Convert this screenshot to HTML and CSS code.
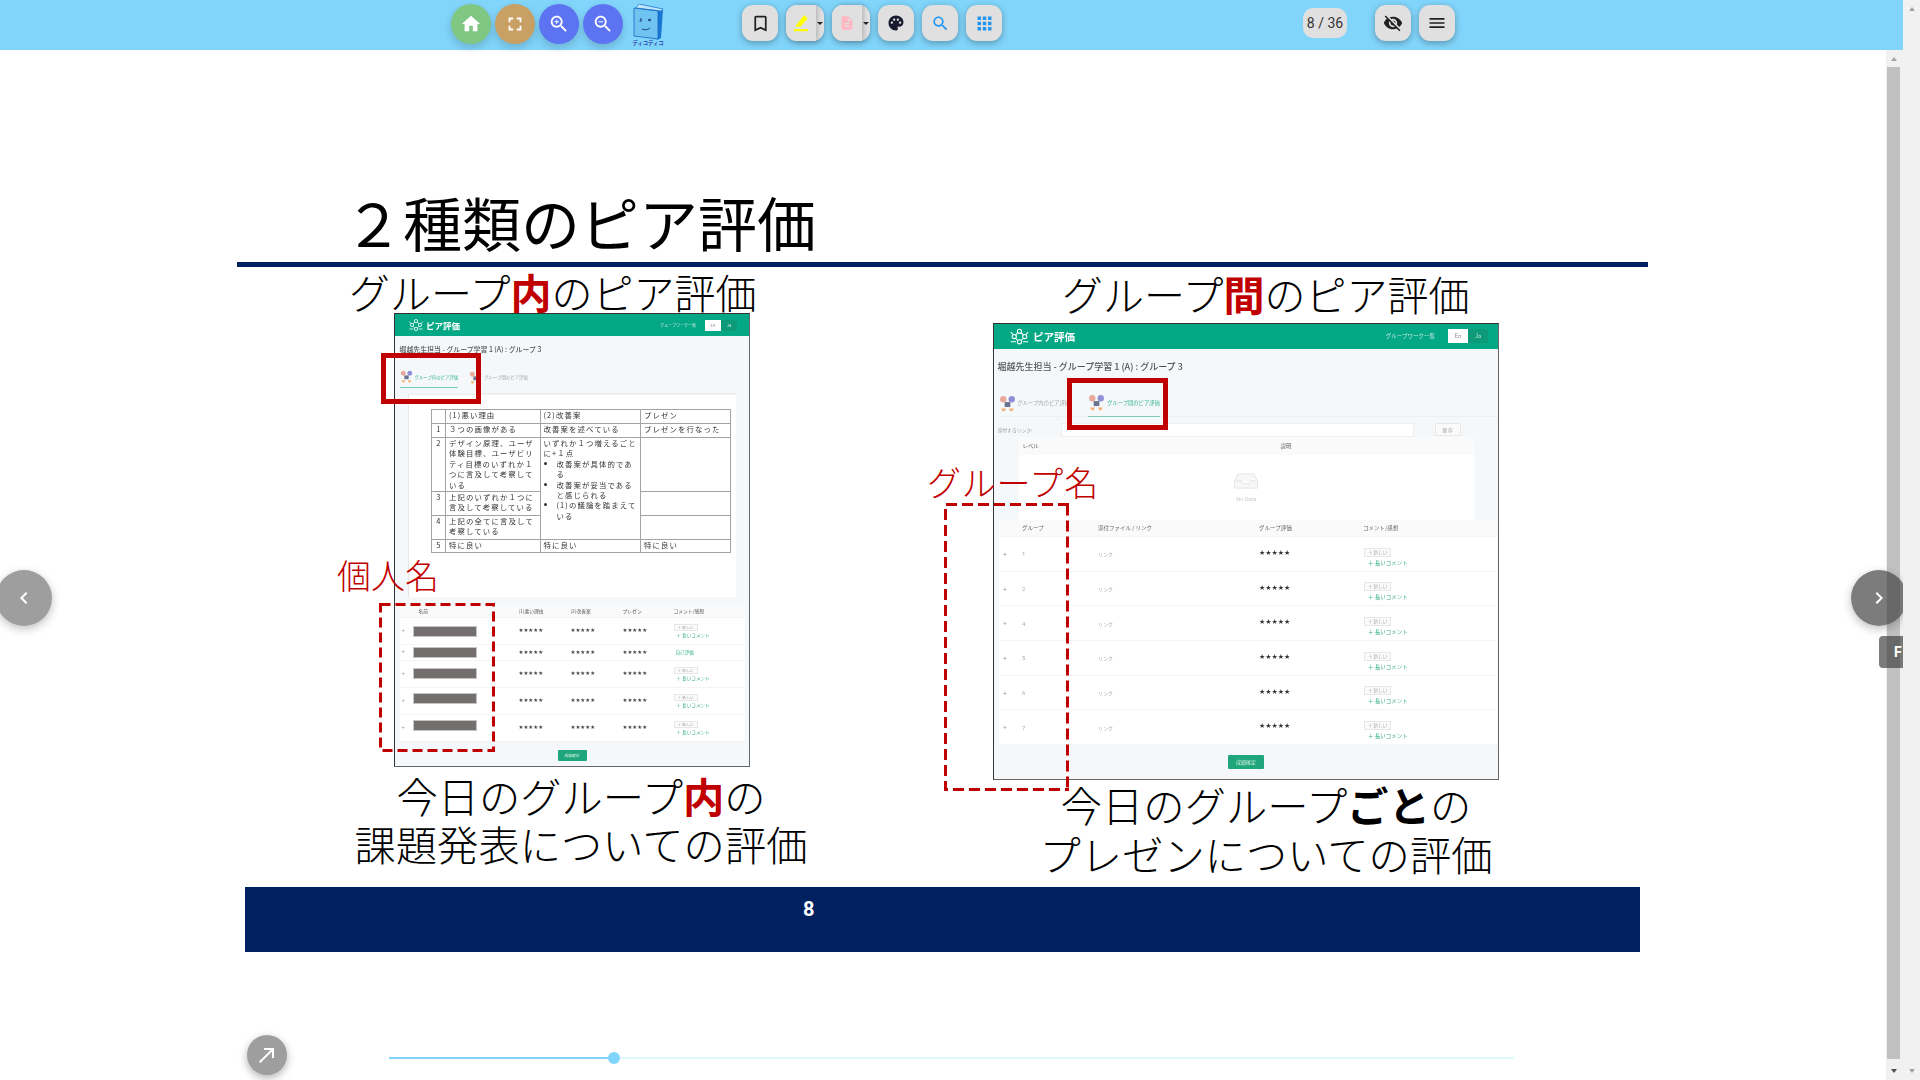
FILE: index.html
```html
<!DOCTYPE html>
<html lang="ja">
<head>
<meta charset="utf-8">
<title>2種類のピア評価</title>
<link rel="stylesheet" href="styles.css">
</head>
<body>
<svg class="defs" width="0" height="0" aria-hidden="true">
  <symbol id="net" viewBox="0 0 24 24">
    <g fill="none" stroke="#fff" stroke-width="1.2">
      <circle cx="12" cy="6" r="2.4"/><circle cx="6" cy="12" r="2.4"/><circle cx="18" cy="12" r="2.4"/><circle cx="12" cy="18" r="2.4"/>
      <path d="M10 7.5 7.5 10.5M14 7.5l2.500 3M7.500 14l2.500 2.500M16.500 14 14 16.500M2 7l3 3M22 7l-3 3M2 18h6M16 18h6"/>
    </g>
  </symbol>
  <symbol id="people" viewBox="0 0 24 24">
    <circle cx="6" cy="6" r="4.500" fill="#e9a99b"/><circle cx="18" cy="6" r="4.500" fill="#8f8fd6"/>
    <rect x="8" y="10" width="8" height="7" fill="#6d7290"/>
    <path d="M3 19h7l-2 4H5zM14 19h7l-2 4h-3z" fill="#f3b27a"/>
  </symbol>
</svg>
<div class="app">
  <div class="main">
    <header class="topbar">
      <div class="round-group">
        <button class="round home"><svg class="ic" viewBox="0 0 24 24"><path d="M10 20v-6h4v6h5v-8h3L12 3 2 12h3v8z"/></svg></button>
        <button class="round full"><svg class="ic" viewBox="0 0 24 24"><path d="M7 14H5v5h5v-2H7v-3zm-2-4h2V7h3V5H5v5zm12 7h-3v2h5v-5h-2v3zM14 5v2h3v3h2V5h-5z"/></svg></button>
        <button class="round zoom"><svg class="ic" viewBox="0 0 24 24"><path d="M15.500 14h-.79l-.28-.27C15.410 12.590 16 11.110 16 9.500 16 5.910 13.090 3 9.500 3S3 5.910 3 9.500 5.910 16 9.500 16c1.610 0 3.090-.59 4.230-1.570l.27.28v.79l5 4.990L20.490 19l-4.990-5zm-6 0C7.010 14 5 11.990 5 9.500S7.010 5 9.500 5 14 7.010 14 9.500 11.990 14 9.500 14z"/><path d="M12 10h-2v2H9v-2H7V9h2V7h1v2h2v1z"/></svg></button>
        <button class="round zoom"><svg class="ic" viewBox="0 0 24 24"><path d="M15.500 14h-.79l-.28-.27C15.410 12.590 16 11.110 16 9.500 16 5.910 13.090 3 9.500 3S3 5.910 3 9.500 5.910 16 9.500 16c1.610 0 3.090-.59 4.230-1.570l.27.28v.79l5 4.990L20.490 19l-4.990-5zm-6 0C7.010 14 5 11.990 5 9.500S7.010 5 9.500 5 14 7.010 14 9.500 11.990 14 9.500 14zM7 9h5v1H7z"/></svg></button>
      </div>
      <div class="logo">
        <svg class="logo-book" viewBox="0 0 30 36">
          <path d="M6 0 30 5 28 34 24 36Z" fill="#1976d2"/>
          <path d="M6 0 30 5 28 7 3 4Z" fill="#bfe6fb" stroke="#1976d2" stroke-width=".7"/>
          <path d="M1 4 25 7 25 35 1 32Z" fill="#6fc3f0" stroke="#1565c0" stroke-width=".8"/>
          <path d="M8 14v4M8 16l-1.500 1M18 15l-3 1 3 1M9 25c3 1.500 6 .8 8-1" fill="none" stroke="#173f7a" stroke-width="1"/>
        </svg>
        <span class="logo-text">ディコディコ</span>
      </div>
      <div class="tools">
        <button class="tool"><svg class="ic dark bookmark" viewBox="0 0 24 24"><path d="M17 3H7c-1.100 0-2 .9-2 2v16l7-3 7 3V5c0-1.100-.9-2-2-2zm0 15-5-2.180L7 18V5h10v13z"/></svg></button>
        <div class="split">
          <button class="split-main"><svg class="ic yellow" viewBox="0 0 24 24"><path d="M16 1.500 21 5.500 11.500 17H5.500V14.500zM2.500 20h19v3h-19z"/></svg></button>
          <span class="caret"></span>
        </div>
        <div class="split">
          <button class="split-main"><svg class="ic pink" viewBox="0 0 24 24"><path d="M14 2H6c-1.100 0-2 .9-2 2v16c0 1.100.9 2 2 2h12c1.100 0 2-.9 2-2V8l-6-6zm2 16H8v-2h8v2zm0-4H8v-2h8v2zm-3-5V3.500L18.500 9H13z"/></svg></button>
          <span class="caret"></span>
        </div>
        <button class="tool"><svg class="ic navy" viewBox="0 0 24 24"><path d="M12 2C6.490 2 2 6.490 2 12s4.490 10 10 10c1.380 0 2.500-1.120 2.500-2.500 0-.61-.23-1.200-.64-1.670-.08-.1-.13-.21-.13-.33 0-.28.22-.5.5-.5H16c3.310 0 6-2.690 6-6 0-4.960-4.490-9-10-9zm5.500 11c-.83 0-1.500-.67-1.500-1.500s.67-1.500 1.500-1.500 1.500.67 1.500 1.500-.67 1.500-1.500 1.500zm-3-4c-.83 0-1.500-.67-1.500-1.500S13.670 6 14.500 6s1.500.67 1.500 1.500S15.330 9 14.500 9zM5 11.500c0-.83.67-1.500 1.500-1.500s1.500.67 1.500 1.500S7.330 13 6.500 13 5 12.330 5 11.500zm6-4c0 .83-.67 1.500-1.500 1.500S8 8.330 8 7.500 8.670 6 9.500 6s1.500.67 1.500 1.500z"/></svg></button>
        <button class="tool"><svg class="ic blue find" viewBox="0 0 24 24"><path d="M15.500 14h-.79l-.28-.27C15.410 12.590 16 11.110 16 9.500 16 5.910 13.090 3 9.500 3S3 5.910 3 9.500 5.910 16 9.500 16c1.610 0 3.090-.59 4.230-1.570l.27.28v.79l5 4.990L20.490 19l-4.990-5zm-6 0C7.010 14 5 11.990 5 9.500S7.010 5 9.500 5 14 7.010 14 9.500 11.990 14 9.500 14z"/></svg></button>
        <button class="tool"><svg class="ic blue apps" viewBox="0 0 24 24"><path d="M4 8h4V4H4v4zm6 12h4v-4h-4v4zm-6 0h4v-4H4v4zm0-6h4v-4H4v4zm6 0h4v-4h-4v4zm6-10v4h4V4h-4zm-6 4h4V4h-4v4zm6 6h4v-4h-4v4zm0 6h4v-4h-4v4z"/></svg></button>
      </div>
      <div class="pager">8 / 36</div>
      <div class="side-tools">
        <button class="tool"><svg class="ic dark side" viewBox="0 0 24 24"><path d="M12 7c2.760 0 5 2.240 5 5 0 .65-.13 1.260-.36 1.830l2.920 2.920c1.510-1.260 2.700-2.890 3.430-4.750-1.730-4.390-6-7.500-11-7.500-1.400 0-2.740.25-3.980.7l2.160 2.160C10.740 7.130 11.350 7 12 7zM2 4.270l2.280 2.280.46.46C3.080 8.300 1.780 10.020 1 12c1.730 4.390 6 7.500 11 7.500 1.550 0 3.030-.3 4.380-.84l.42.42L19.730 22 21 20.730 3.270 3 2 4.270zM7.530 9.800l1.550 1.550c-.05.21-.08.43-.08.65 0 1.660 1.340 3 3 3 .22 0 .44-.03.65-.08l1.550 1.550c-.67.33-1.410.53-2.200.53-2.760 0-5-2.240-5-5 0-.79.2-1.530.53-2.200zm4.310-.78 3.150 3.150.02-.16c0-1.660-1.340-3-3-3l-.17.01z"/></svg></button>
        <button class="tool"><svg class="ic dark side" viewBox="0 0 24 24"><path d="M3 18h18v-2H3v2zm0-5h18v-2H3v2zm0-7v2h18V6H3z"/></svg></button>
      </div>
    </header>

    <div class="viewer">
      <div class="stage">
        <section class="slide">
          <h1 class="title">２種類のピア評価</h1>
          <div class="rule"></div>

          <div class="sub sub-left">グループ<b>内</b>のピア評価</div>
          <div class="sub sub-right">グループ<b>間</b>のピア評価</div>

          <!-- left screenshot -->
          <div class="shot shot-left">
            <div class="s-head">
              <svg class="s-logo"><use href="#net"/></svg>
              <span class="s-brand">ピア評価</span>
              <span class="s-nav">グループワーク一覧</span>
              <span class="s-en">En</span><span class="s-ja">Ja</span>
            </div>
            <div class="s-title">堀越先生担当 - グループ学習 1 (A) : グループ 3</div>
            <div class="s-tabs">
              <div class="s-tab on"><svg class="s-tic"><use href="#people"/></svg><span>グループ内のピア評価</span></div>
              <div class="s-tab"><svg class="s-tic"><use href="#people"/></svg><span>グループ間のピア評価</span></div>
            </div>
            <div class="card">
              <table class="rubric">
                <colgroup><col class="c0"><col class="c1"><col class="c2"><col class="c3"></colgroup>
                <tr class="h14"><td></td><td>(1)悪い理由</td><td>(2)改善案</td><td>プレゼン</td></tr>
                <tr class="h14"><td class="num">1</td><td>３つの画像がある</td><td>改善案を述べている</td><td>プレゼンを行なった</td></tr>
                <tr class="h54"><td class="num">2</td><td>デザイン原理、ユーザ<br>体験目標、ユーザビリ<br>ティ目標のいずれか１<br>つに言及して考察して<br>いる</td>
                  <td rowspan="3">いずれか１つ増えるごと<br>に+１点
                    <ul><li>改善案が具体的であ<br>る</li><li>改善案が妥当である<br>と感じられる</li><li>(1)の議論を踏まえて<br>いる</li></ul></td><td></td></tr>
                <tr class="h24"><td class="num">3</td><td>上記のいずれか１つに<br>言及して考察している</td><td></td></tr>
                <tr class="h24"><td class="num">4</td><td>上記の全てに言及して<br>考察している</td><td></td></tr>
                <tr class="h13"><td class="num">5</td><td>特に良い</td><td>特に良い</td><td>特に良い</td></tr>
              </table>
            </div>
            <div class="ltable">
              <div class="lrow lhead"><span></span><span class="name-h">名前</span><span>(1)悪い理由</span><span>(2)改善案</span><span>プレゼン</span><span>コメント/感想</span></div>
              <div class="lrow tall"><span class="pm">+</span><i class="bar"></i><span class="st">★★★★★</span><span class="st">★★★★★</span><span class="st">★★★★★</span><div class="cm"><span class="new">＋ 新しい</span><span class="long">＋ 長いコメント</span></div></div>
              <div class="lrow short"><span class="pm">+</span><i class="bar"></i><span class="st">★★★★★</span><span class="st">★★★★★</span><span class="st">★★★★★</span><div class="cm"><span class="long self">自己評価</span></div></div>
              <div class="lrow tall"><span class="pm">+</span><i class="bar"></i><span class="st">★★★★★</span><span class="st">★★★★★</span><span class="st">★★★★★</span><div class="cm"><span class="new">＋ 新しい</span><span class="long">＋ 長いコメント</span></div></div>
              <div class="lrow tall"><span class="pm">+</span><i class="bar nudge"></i><span class="st">★★★★★</span><span class="st">★★★★★</span><span class="st">★★★★★</span><div class="cm"><span class="new">＋ 新しい</span><span class="long">＋ 長いコメント</span></div></div>
              <div class="lrow tall"><span class="pm">+</span><i class="bar nudge"></i><span class="st">★★★★★</span><span class="st">★★★★★</span><span class="st">★★★★★</span><div class="cm"><span class="new">＋ 新しい</span><span class="long">＋ 長いコメント</span></div></div>
            </div>
            <div class="s-foot"><span class="s-btn">成績確定</span></div>
          </div>

          <!-- right screenshot -->
          <div class="shot shot-right">
            <div class="s-head">
              <svg class="s-logo"><use href="#net"/></svg>
              <span class="s-brand">ピア評価</span>
              <span class="s-nav">グループワーク一覧</span>
              <span class="s-en">En</span><span class="s-ja">Ja</span>
            </div>
            <div class="s-title">堀越先生担当 - グループ学習 1 (A) : グループ 3</div>
            <div class="s-tabs">
              <div class="s-tab"><svg class="s-tic"><use href="#people"/></svg><span>グループ内のピア評価</span></div>
              <div class="s-tab on"><svg class="s-tic"><use href="#people"/></svg><span>グループ間のピア評価</span></div>
            </div>
            <div class="linkrow"><span class="linklabel">添付するリンク:</span><span class="linkbox"></span><span class="savebtn">保 存</span></div>
            <div class="level">
              <div class="level-head"><span>レベル</span><span>説明</span></div>
              <div class="nodata">
                <svg class="inbox" viewBox="0 0 28 18"><path d="M5 1h18l4 8v8H1V9zM1 9h8l1 3h8l1-3h8" fill="#f7f7f7" stroke="#e3e3e3"/></svg>
                <span>No Data</span>
              </div>
            </div>
            <div class="gtable">
              <div class="grow ghead"><span></span><span>グループ</span><span>添付ファイル / リンク</span><span>グループ評価</span><span>コメント/感想</span></div>
              <div class="grow"><span class="pm">+</span><span class="gn">1</span><span class="gl">リンク</span><span class="st">★★★★★</span><div class="cm"><span class="new">＋ 新しい</span><span class="long">＋ 長いコメント</span></div></div>
              <div class="grow"><span class="pm">+</span><span class="gn">2</span><span class="gl">リンク</span><span class="st">★★★★★</span><div class="cm"><span class="new">＋ 新しい</span><span class="long">＋ 長いコメント</span></div></div>
              <div class="grow"><span class="pm">+</span><span class="gn">4</span><span class="gl">リンク</span><span class="st">★★★★★</span><div class="cm"><span class="new">＋ 新しい</span><span class="long">＋ 長いコメント</span></div></div>
              <div class="grow"><span class="pm">+</span><span class="gn">5</span><span class="gl">リンク</span><span class="st">★★★★★</span><div class="cm"><span class="new">＋ 新しい</span><span class="long">＋ 長いコメント</span></div></div>
              <div class="grow"><span class="pm">+</span><span class="gn">6</span><span class="gl">リンク</span><span class="st">★★★★★</span><div class="cm"><span class="new">＋ 新しい</span><span class="long">＋ 長いコメント</span></div></div>
              <div class="grow"><span class="pm">+</span><span class="gn">7</span><span class="gl">リンク</span><span class="st">★★★★★</span><div class="cm"><span class="new">＋ 新しい</span><span class="long">＋ 長いコメント</span></div></div>
            </div>
            <div class="s-foot"><span class="s-btn">成績確定</span></div>
          </div>

          <!-- annotations -->
          <div class="mark mark-left"></div>
          <div class="mark mark-right"></div>
          <svg class="dash dash-left" viewBox="0 0 116 149"><rect x="1.500" y="1.500" width="113" height="146"/></svg>
          <svg class="dash dash-right" viewBox="0 0 125 288"><path d="M125 1.500H1.500V286.500H125M123.500 1.500V286.500"/></svg>
          <div class="label label-left">個人名</div>
          <div class="label label-right">グループ名</div>

          <div class="caption cap-left">今日のグループ<b>内</b>の<br>課題発表についての評価</div>
          <div class="caption cap-right">今日のグループ<strong>ごと</strong>の<br>プレゼンについての評価</div>

          <footer class="slide-foot"><span>8</span></footer>
        </section>
      </div>
      <div class="vscroll inner">
        <span class="arr up"></span>
        <span class="thumb"></span>
        <span class="arr down dark"></span>
      </div>
    </div>

    <button class="nav nav-left"><svg class="chev" viewBox="0 0 24 24"><path d="M15.410 7.410 14 6l-6 6 6 6 1.410-1.410L10.830 12z"/></svg></button>
    <button class="nav nav-right"><svg class="chev" viewBox="0 0 24 24"><path d="M10 6 8.590 7.410 13.170 12l-4.580 4.590L10 18l6-6z"/></svg></button>
    <div class="ftab">F</div>
    <button class="expand"><svg class="ic" viewBox="0 0 24 24"><path d="M9 5v2h6.590L4 18.590 5.410 20 17 8.410V15h2V5z"/></svg></button>
    <div class="slider"><span class="fill"></span><span class="knob"></span><span class="rest"></span></div>
  </div>
  <div class="vscroll outer">
    <span class="arr up"></span>
    <span class="arr down"></span>
  </div>
</div>
</body>
</html>
```
FILE: styles.css
```css
* { box-sizing: border-box; }
html, body { margin: 0; height: 100%; overflow: hidden; background: #fff; }
body { font-family: "Noto Sans CJK JP", "Noto Sans", sans-serif; color: #000; }
.defs { position: absolute; }
button { border: 0; padding: 0; font: inherit; }

.app { display: grid; grid-template-columns: 1fr 17px; height: 1080px; }
.main { position: relative; overflow: hidden; display: flex; flex-direction: column; min-width: 0; }

/* top bar */
.topbar { position: relative; z-index: 3; flex: 0 0 50px; background: #81d4fa; display: flex; align-items: flex-start; padding-left: 451px; }
.round-group { display: flex; gap: 4px; margin-top: 4px; }
.round { width: 40px; height: 40px; border-radius: 50%; display: flex; align-items: center; justify-content: center; box-shadow: 0 4px 8px rgba(0,0,0,.16); }
.home { background: #81c784; }
.full { background: #c9a063; }
.zoom { background: #5c73f2; }
.ic { width: 18px; height: 18px; fill: #fff; display: block; }
.round .ic { width: 22px; height: 22px; }
.ic.dark { fill: #212121; }
.ic.navy { fill: #1a1a2e; }
.ic.blue { fill: #2196f3; }
.ic.bookmark { width: 21px; height: 21px; }
.ic.find { width: 19px; height: 19px; }
.ic.apps { width: 21px; height: 21px; }
.ic.side { width: 20px; height: 20px; }
.ic.yellow { fill: #ffff00; width: 18px; height: 18px; }
.ic.pink { fill: #ffb6c1; width: 16px; height: 16px; }
.logo { margin: 4px 0 0 10px; width: 30px; height: 44px; display: flex; flex-direction: column; align-items: center; }
.logo-book { width: 30px; height: 36px; display: block; flex: none; }
.logo-text { font-size: 5.300px; line-height: 7px; font-weight: 700; color: #2a4bb0; white-space: nowrap; }
.tools { display: flex; gap: 8px; margin: 5px 0 0 79px; }
.tool { width: 36px; height: 36px; border-radius: 11px; background: #e0e0e0; display: flex; align-items: center; justify-content: center; box-shadow: 0 2px 6px rgba(0,0,0,.3); }
.split { position: relative; width: 38px; height: 36px; border-radius: 11px; background: #e0e0e0; box-shadow: 0 2px 6px rgba(0,0,0,.3); }
.split-main { width: 30px; height: 36px; border-radius: 11px 0 0 11px; background: #e0e0e0; display: flex; align-items: center; justify-content: center; box-shadow: 2px 0 4px rgba(0,0,0,.18); }
.caret { position: absolute; left: 31px; top: 17px; border: 3px solid transparent; border-top: 3px solid #222; border-bottom: 0; }
.pager { margin: 8px 0 0 301px; width: 44px; height: 30px; border-radius: 10px; background: #e0e0e0; font: 14px/30px Roboto, sans-serif; color: #333; text-align: center; }
.side-tools { display: flex; gap: 8px; margin: 5px 0 0 28px; }

/* viewer */
.viewer { flex: 1; display: flex; min-height: 0; }
.stage { flex: 1; position: relative; }
.slide { position: relative; height: 1080px; margin-top: -50px; }
.title { position: absolute; left: 344px; top: 188.500px; margin: 0; font-size: 59px; line-height: 66px; font-weight: 400; white-space: nowrap; }
.rule { position: absolute; left: 237px; top: 262px; width: 1411px; height: 5px; background: #002060; }
.sub { position: absolute; font-size: 41px; line-height: 50px; font-weight: 300; white-space: nowrap; }
.sub b, .caption b { color: #c00000; font-weight: 700; }
.caption strong { font-weight: 700; }
.sub-left { left: 349px; top: 265.500px; }
.sub-right { left: 1062px; top: 267.500px; }
.caption { position: absolute; font-size: 41.300px; font-weight: 300; text-align: center; white-space: nowrap; }
.cap-left { left: 281px; width: 600px; top: 771px; line-height: 48px; }
.cap-right { left: 966px; width: 600px; top: 780px; line-height: 49px; }
.label { position: absolute; font-size: 34px; line-height: 44px; color: #c00000; font-weight: 300; white-space: nowrap; }
.label-left { left: 337px; top: 553px; }
.label-right { left: 927px; top: 460px; letter-spacing: .8px; }
.slide-foot { position: absolute; left: 245px; top: 887px; width: 1395px; height: 65px; background: #002060; color: #fff; font: 700 20px/26px Roboto, sans-serif; padding: 9px 0 0 558px; }

.mark { position: absolute; border: 5px solid #c00000; }
.mark-left { left: 380.500px; top: 353px; width: 100.500px; height: 51px; }
.mark-right { left: 1067px; top: 378px; width: 101px; height: 52px; }
.dash { position: absolute; fill: none; stroke: #c00000; stroke-width: 3; stroke-dasharray: 10 5; overflow: visible; }
.dash-left { left: 379px; top: 603px; width: 116px; height: 149px; }
.dash-right { left: 944px; top: 503px; width: 125px; height: 288px; }
.dash-right path { stroke-dasharray: 11 5; }

/* embedded screenshots */
.shot { position: absolute; background: #f5f8fb; border: 1.500px solid #333; border-right-color: #666; border-bottom-color: #666; filter: blur(.45px); color: #555; overflow: hidden; display: flex; flex-direction: column; }
.shot-left { left: 394px; top: 313px; width: 356px; height: 454px; }
.shot-right { left: 993px; top: 323px; width: 506px; height: 457px; }
.s-head { background: #05a884; display: flex; align-items: center; color: #fff; flex: none; }
.s-brand { font-weight: 700; white-space: nowrap; }
.s-nav { margin-left: auto; color: #bfe8dc; white-space: nowrap; }
.s-en { background: #fff; color: #888; text-align: center; }
.s-ja { background: #0d9a78; color: #d5f0e8; text-align: center; }
.s-title { white-space: nowrap; font-weight: 500; flex: none; }
.s-tabs { display: flex; flex: none; }
.s-tab { display: flex; align-items: center; color: #aaa; white-space: nowrap; }
.s-tab.on { color: #3bb58e; border-bottom: 1px solid #7ccdb0; }
.s-foot { display: flex; justify-content: center; flex: none; }
.s-btn { background: #1fa67a; color: #cfeee2; text-align: center; }

.shot-left .s-head { height: 22px; padding: 0 12px 0 13px; }
.shot-left .s-logo { width: 16px; height: 16px; margin-right: 2px; }
.shot-left .s-brand { font-size: 8.500px; }
.shot-left .s-nav { font-size: 4px; margin-right: 9px; }
.shot-left .s-en, .shot-left .s-ja { width: 16px; height: 11px; font-size: 4px; line-height: 11px; }
.shot-left .s-title { font-size: 6.900px; line-height: 12px; margin: 7px 0 0 4.500px; }
.shot-left .s-tabs { height: 33px; margin-left: 4.500px; gap: 11px; }
.shot-left .s-tab { font-size: 4.400px; gap: 2px; padding-top: 11px; height: 33px; }
.shot-left .s-tic { width: 13px; height: 13px; }
.card { flex: none; margin: 5px 0 0 12.500px; width: 328px; height: 204px; background: #fff; border-left: 1px solid #e6e6e6; border-top: 2px solid #eef0f2; padding: 14px 0 0 22px; }
.rubric { border-collapse: collapse; table-layout: fixed; width: 299px; font-size: 7.400px; line-height: 10.400px; letter-spacing: 1.100px; color: #333; }
.rubric td { border: 1px solid #a3a3a3; padding: 0 0 0 3px; vertical-align: top; overflow: hidden; white-space: nowrap; }
.rubric .c0 { width: 14.500px; } .rubric .c1 { width: 94.500px; } .rubric .c2 { width: 100.500px; } .rubric .c3 { width: 89.500px; }
.rubric .num { text-align: center; padding: 0; letter-spacing: 0; }
.h14 { height: 14px; } .h54 { height: 54px; } .h24 { height: 24px; } .h13 { height: 13px; }
.rubric ul { margin: 0; padding: 0 0 0 13px; }
.ltable { flex: none; margin: 8px 0 0 4.500px; width: 345px; background: #fff; }
.lrow { display: grid; grid-template-columns: 14px 105px 52px 52px 51px 1fr; font-size: 4.500px; line-height: 6px; color: #666; border-bottom: 1px solid #f4f4f4; align-items: center; }
.lhead { height: 13px; background: #fafafa; color: #555; font-size: 4.800px; }
.name-h { padding-left: 5px; }
.tall { height: 27px; } .short { height: 15.500px; }
.pm { color: #999; font-size: 6px; padding-left: 2px; }
.bar { display: block; width: 62px; height: 9px; margin-left: .5px; background: #736f6e; outline: 1px solid #c6c4c3; outline-offset: 0; }
.bar.nudge { margin-top: -4px; }
.st { font: 5.500px/6px "DejaVu Sans", sans-serif; color: #444; align-self: start; margin-top: 9px; }
.short .st { margin-top: 4px; }
.cm { display: flex; flex-direction: column; align-items: flex-start; gap: 2px; }
.new { border: 1px solid #e8e8e8; background: #fafafa; color: #aaa; font-size: 3.800px; line-height: 5px; padding: 0 3px; }
.long { color: #35ad85; font-size: 4.600px; line-height: 6px; margin-left: 3px; white-space: nowrap; }
.long.self { margin-left: 2px; }
.shot-left .s-foot { margin-top: 8px; }
.shot-left .s-btn { width: 29px; height: 11px; font-size: 3.800px; line-height: 11px; border-radius: 1px; }

.shot-right .s-head { height: 24.500px; padding: 0 10px 0 15px; }
.shot-right .s-logo { width: 21px; height: 21px; margin-right: 3px; }
.shot-right .s-brand { font-size: 10.500px; }
.shot-right .s-nav { font-size: 5.500px; margin-right: 13px; }
.shot-right .s-en, .shot-right .s-ja { width: 20px; height: 14px; font-size: 5.500px; line-height: 14px; }
.shot-right .s-title { font-size: 9px; line-height: 14px; margin: 11px 0 0 3.500px; }
.shot-right .s-tabs { height: 43px; margin-left: 4.500px; gap: 18px; border-bottom: 1px solid #eef1f4; }
.shot-right .s-tab { font-size: 5.300px; gap: 2px; height: 43px; padding-top: 16px; }
.shot-right .s-tic { width: 17px; height: 17px; }
.linkrow { display: flex; align-items: center; height: 14px; margin-top: 6px; padding-left: 3.500px; font-size: 4.800px; color: #999; flex: none; }
.linklabel { width: 63px; white-space: nowrap; }
.linkbox { width: 353px; height: 14px; background: #fff; border: 1px solid #eee; }
.savebtn { margin-left: 21px; width: 26px; height: 13px; border: 1px solid #e8e8e8; background: #fafafa; text-align: center; line-height: 12px; }
.level { flex: none; margin-left: 25px; width: 455.500px; height: 83px; background: #fff; display: flex; flex-direction: column; }
.level-head { height: 18px; background: #fafafa; display: grid; grid-template-columns: 258px 1fr; align-items: center; padding-left: 3.500px; font-size: 5.400px; color: #666; flex: none; }
.nodata { flex: 1; display: flex; flex-direction: column; align-items: center; padding-top: 18px; font: 5.500px/10px Roboto, sans-serif; color: #ccc; gap: 5px; margin-left: -1px; }
.inbox { width: 26px; height: 16px; }
.gtable { flex: none; margin-left: 5px; width: 498px; background: #fff; }
.grow { display: grid; grid-template-columns: 23px 76px 161px 104px 1fr; height: 34.700px; border-bottom: 1px solid #f4f4f4; align-items: center; font-size: 5px; color: #aaa; }
.ghead { height: 17.500px; background: #fafafa; color: #666; font-size: 5.500px; }
.grow .pm { padding-left: 4px; font-size: 7px; }
.gn { font-family: Roboto, sans-serif; font-size: 6px; color: #aaa; }
.gl { font-size: 5px; }
.grow .st { font-size: 7px; line-height: 7px; margin-top: 13px; color: #333; }
.grow .new { font-size: 4.600px; line-height: 7px; padding: 0 3px; }
.grow .long { font-size: 5.500px; line-height: 7px; margin-left: 4px; }
.grow .cm { gap: 3px; align-self: start; margin-top: 10.500px; margin-left: 1px; }
.shot-right .s-foot { margin-top: 10px; }
.shot-right .s-btn { width: 36px; height: 14px; font-size: 5px; line-height: 14px; border-radius: 1px; }
.ltable .cm { gap: 1px; }

/* scrollbars */
.vscroll { width: 17px; flex: none; background: #f1f1f1; display: flex; flex-direction: column; align-items: center; }
.vscroll .arr { display: block; width: 0; height: 0; border-left: 3.500px solid transparent; border-right: 3.500px solid transparent; }
.arr.up { border-bottom: 4px solid #a3a3a3; margin-top: 7px; }
.arr.down { border-top: 4px solid #a3a3a3; }
.arr.down.dark { border-top-color: #505050; }
.inner .thumb { width: 13px; height: 992px; background: #c1c1c1; margin: 6px 2px 10px 0; }
.inner .arr { margin-left: -2px; }
.outer { justify-content: space-between; padding-bottom: 7px; }

/* overlays */
.nav { position: absolute; top: 570px; width: 56px; height: 56px; border-radius: 50%; display: flex; align-items: center; justify-content: center; box-shadow: 0 3px 10px rgba(0,0,0,.25); z-index: 2; }
.nav-left { left: -4px; background: #9e9e9e; }
.nav-right { left: 1851px; background: rgba(60,60,60,.67); }
.chev { width: 24px; height: 24px; fill: #fff; }
.ftab { position: absolute; z-index: 2; left: 1879px; top: 636px; width: 40px; height: 32px; border-radius: 4px; background: rgba(60,60,60,.67); color: #fff; font: 700 14px/32px Roboto, sans-serif; padding-left: 15px; }
.expand { position: absolute; z-index: 2; left: 247px; top: 1035px; width: 40px; height: 40px; border-radius: 50%; background: #9e9e9e; display: flex; align-items: center; justify-content: center; box-shadow: 0 3px 8px rgba(0,0,0,.3); }
.expand .ic { width: 24px; height: 24px; }
.slider { position: absolute; z-index: 2; left: 389px; top: 1052px; width: 1125px; height: 12px; display: flex; align-items: center; }
.fill { width: 225px; height: 2px; background: #81d4fa; flex: none; }
.rest { flex: 1; height: 2px; background: #dcfbff; }
.knob { width: 12px; height: 12px; border-radius: 50%; background: #81d4fa; margin: 0 -6px; position: relative; flex: none; }
```
